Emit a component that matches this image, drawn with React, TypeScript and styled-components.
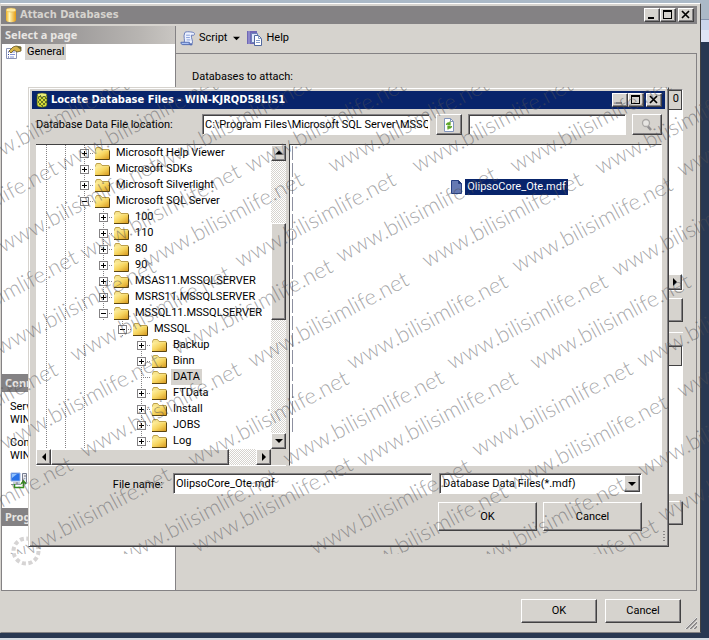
import React from "react";
import styled, { createGlobalStyle, css } from "styled-components";

const face = "#d6d3ce";
const shade = "#848284";
const dark = "#424142";
const navy = "#08246b";

const GlobalStyle = createGlobalStyle`
  * { box-sizing: border-box; }
  body { margin: 0; background: #293852; }
  body, button, input, select { font: 11px/16px Roboto, "Liberation Sans", sans-serif; color: #000; }
  button, input, select { margin: 0; padding: 0; border-radius: 0; }
`;

const raised = css`
  border: 1px solid;
  border-color: #fff ${dark} ${dark} #fff;
  box-shadow: inset -1px -1px 0 ${shade};
  background: ${face};
`;
const sunken = css`
  border: 1px solid;
  border-color: ${shade} #fff #fff ${shade};
  box-shadow: inset 1px 1px 0 ${dark};
  background: #fff;
`;

const Desktop = styled.div`
  position: relative;
  display: flex;
  flex-direction: column;
  min-height: 100vh;
  padding: 3px 8px 5px 0;
  overflow: hidden;
  border-bottom: 2px solid #d6dbe2;
  background: linear-gradient(#abb9c7 0 19px, #8494ae 19px 20px, #cbd5ea 20px 30px, #dfe5f5 30px 42px, #293852 42px);
`;
const MainWindow = styled.main`
  flex: 1;
  display: flex;
  flex-direction: column;
  padding: 2px 3px 2px 0;
  border: 1px solid;
  border-color: #fff ${dark} ${shade} ${face};
  background: ${face};
`;
const TitleBar = styled.header<{ $active?: boolean }>`
  display: flex;
  align-items: center;
  height: 18px;
  padding: 0 3px 0 4px;
  background: ${(p) => (p.$active ? navy : shade)};
  color: ${(p) => (p.$active ? "#fff" : face)};
`;
const Title = styled.h1`
  flex: 1;
  margin: 0 0 0 3px;
  font: bold 11px/16px "DejaVu Sans Condensed", "DejaVu Sans", sans-serif;
  white-space: nowrap;
`;
const Captions = styled.div`
  display: flex;
  button:last-child { margin-left: 2px; }
`;
const Caption = styled.button`
  ${raised}
  display: grid;
  place-items: center;
  width: 16px;
  height: 14px;
`;
const Body = styled.div`
  flex: 1;
  display: grid;
  grid-template-columns: 175px 1fr;
  margin-top: 2px;
  border-bottom: 1px solid ${shade};
`;
const Sidebar = styled.nav`
  border: solid ${shade};
  border-width: 0 1px;
  background: #fff;
`;
const SideTitle = styled.h2<{ $fade?: boolean }>`
  margin: 0;
  height: 18px;
  padding-left: 3px;
  color: #e8e6e3;
  font: bold 11px/18px "Noto Sans", sans-serif;
  background: ${(p) => (p.$fade ? `linear-gradient(90deg, ${shade}, #b8b5b2 80%, #c9c6c2)` : shade)};
`;
const PageList = styled.div`
  height: 330px;
`;
const PageItem = styled.button`
  display: flex;
  align-items: center;
  gap: 3px;
  height: 16px;
  padding-left: 3px;
  border: 0;
  background: none;
  span { padding: 0 2px; background: ${face}; }
`;
const Connection = styled.div`
  height: 116px;
  padding: 8px 8px 0;
  line-height: 13px;
  white-space: nowrap;
  overflow: hidden;
  p { margin: 0 0 10px; }
`;
const ConnectionLink = styled.a`
  display: flex;
  align-items: center;
  gap: 4px;
  color: #0000c0;
`;
const Progress = styled.div`
  padding: 9px 8px;
`;
const Content = styled.section`
  display: flex;
  flex-direction: column;
`;
const Toolbar = styled.div`
  display: flex;
  align-items: center;
  gap: 6px;
  height: 28px;
  padding: 0 4px 3px;
  border-bottom: 1px solid ${shade};
`;
const Tool = styled.button`
  display: flex;
  align-items: center;
  gap: 3px;
  border: 0;
  background: none;
`;
const Form = styled.div`
  flex: 1;
  padding: 15px 13px 0 16px;
  border-right: 1px solid ${shade};
`;
const Grid = styled.div<{ $tall?: boolean }>`
  ${sunken}
  display: flex;
  flex-direction: column;
  align-items: flex-end;
  justify-content: space-between;
  height: ${(p) => (p.$tall ? 202 : 149)}px;
  margin-top: ${(p) => (p.$tall ? 4 : 12)}px;
`;
const GridHead = styled.div`
  align-self: stretch;
  height: 20px;
  padding-right: 2px;
  border: 1px solid ${dark};
  background: ${face};
  text-align: right;
`;
const Actions = styled.div<{ $rule?: boolean }>`
  display: flex;
  justify-content: flex-end;
  margin-top: 7px;
  padding-bottom: 10px;
  border-bottom: ${(p) => (p.$rule ? "1px solid #fff" : "0")};
`;
const PushButton = styled.button<{ $size?: "small" | "large" }>`
  ${raised}
  width: ${(p) => (p.$size === "large" ? 99 : 76)}px;
  height: ${(p) => (p.$size === "large" ? 29 : 24)}px;
`;
const Footer = styled.footer`
  display: flex;
  gap: 8px;
  justify-content: flex-end;
  height: 39px;
  padding: 8px 0 0;
  svg { align-self: flex-end; margin: 0 0 1px -4px; }
`;

const Dialog = styled.section`
  position: absolute;
  top: 87px;
  left: 28px;
  right: 40px;
  padding: 3px;
  border: 1px solid;
  border-color: ${face} ${dark} ${dark} ${face};
  box-shadow: inset 1px 1px 0 #fff, inset -1px -1px 0 ${shade};
  background: ${face};
`;
const DialogBody = styled.div`
  display: flex;
  flex-direction: column;
  padding: 5px 3px 0 4px;
`;
const DialogGrip = styled.div`
  display: flex;
  justify-content: flex-end;
  height: 12px;
`;
const LocationRow = styled.div`
  display: grid;
  grid-template-columns: 160px 228px 26px 1fr 30px;
  gap: 6px;
  align-items: center;
  margin-bottom: 9px;
  label { white-space: nowrap; }
`;
const TextBox = styled.input`
  ${sunken}
  width: 100%;
  min-width: 0;
  height: 21px;
  padding: 0 1px 0 2px;
`;
const IconButton = styled.button`
  ${raised}
  display: grid;
  place-items: center;
  height: 21px;
`;
const Panes = styled.div`
  display: grid;
  grid-template-columns: 250px 1fr;
  gap: 3px;
  height: 322px;
`;
const TreePane = styled.div`
  display: grid;
  grid-template: 1fr 16px / 1fr 15px;
  border-top: 1px solid ${dark};
  border-bottom: 1px solid #fff;
  background: ${face};
`;
const Tree = styled.ul`
  margin: 0;
  padding: 0;
  overflow: hidden;
  background: #fff;
  list-style: none;
`;
const TreeRow = styled.li`
  display: flex;
  align-items: center;
  height: 16px;
  padding-left: 1px;
  white-space: nowrap;
  > svg { flex: none; }
`;
const Guide = styled.span<{ $line: boolean }>`
  flex: none;
  width: 19px;
  height: 16px;
  background: ${(p) =>
    p.$line ? `repeating-linear-gradient(${shade} 0 1px, transparent 1px 2px) 9px 0 / 1px 16px no-repeat` : "none"};
`;
const Branch = styled.span`
  display: flex;
  flex: none;
  align-items: center;
  width: 19px;
  height: 16px;
  padding-left: 5px;
  background:
    repeating-linear-gradient(${shade} 0 1px, transparent 1px 2px) 9px 0 / 1px 16px no-repeat,
    repeating-linear-gradient(90deg, ${shade} 0 1px, transparent 1px 2px) 9px 8px / 10px 1px no-repeat;
`;
const Toggle = styled.button`
  width: 9px;
  height: 9px;
  border: 1px solid ${shade};
  background: #fff;
  svg { display: block; }
`;
const Label = styled.span<{ $selected?: boolean }>`
  margin-left: 3px;
  padding: 0 2px;
  background: ${(p) => (p.$selected ? face : "none")};
`;
const ScrollBar = styled.div<{ $horizontal?: boolean }>`
  display: flex;
  flex-direction: ${(p) => (p.$horizontal ? "row" : "column")};
  background: repeating-conic-gradient(#fff 0 25%, ${face} 0 50%) 0 0 / 2px 2px;
`;
const ScrollButton = styled.button`
  ${raised}
  display: grid;
  place-items: center;
  flex: none;
  width: 15px;
  height: 16px;
`;
const Track = styled.span<{ $grow: number }>`
  flex: ${(p) => p.$grow} 0 0;
`;
const Thumb = styled.span<{ $grow: number }>`
  ${raised}
  flex: ${(p) => p.$grow} 0 0;
`;
const FilePane = styled.div`
  border: 1px solid;
  border-color: ${dark} #fff #fff ${dark};
  padding: 1px 2px 32px;
  background: #fff;
`;
const FileArea = styled.div`
  display: flex;
  align-items: flex-start;
  justify-content: center;
  height: 100%;
  padding: 33px 0 0 68px;
  background: repeating-linear-gradient(#8d90a0 0 14px, transparent 14px 17px) 0 0 / 1px 100% no-repeat;
`;
const FileItem = styled.button`
  display: flex;
  align-items: center;
  gap: 3px;
  border: 0;
  background: none;
  span { padding: 0 2px; background: ${navy}; color: #fff; }
`;
const NameRow = styled.div`
  display: grid;
  grid-template-columns: 137px 1fr 203px;
  margin: 7px 20px 8px 0;
  label { padding: 4px 10px 0 0; text-align: right; }
`;
const NameBox = styled.div`
  padding-right: 7px;
`;
const SelectBox = styled.div`
  ${sunken}
  display: flex;
  height: 21px;
  padding: 1px;
`;
const Select = styled.select`
  flex: 1;
  min-width: 0;
  padding: 0 2px;
  border: 0;
  appearance: none;
  background: none;
`;
const DropArrow = styled.span`
  ${raised}
  display: grid;
  place-items: center;
  width: 16px;
`;
const DialogButtons = styled.div`
  display: flex;
  justify-content: flex-end;
  gap: 6px;
  padding-right: 20px;
`;

const WatermarkLayer = styled.div`
  position: absolute;
  top: 87px;
  left: 0;
  right: 0;
  height: 467px;
  overflow: hidden;
  pointer-events: none;
`;
const Mark = styled.span<{ $x: number; $y: number }>`
  position: absolute;
  left: ${(p) => p.$x}px;
  top: ${(p) => p.$y - 107}px;
  color: rgba(80, 80, 85, 0.5);
  font: 300 22px/24px Lato, "Open Sans", sans-serif;
  white-space: nowrap;
  transform: rotate(-28deg);
  transform-origin: 0 20px;
`;

const marks: [number, number][] = [
  [-27, 172], [62, 172], [155, 173], [250, 173], [333, 173], [417, 173], [515, 173], [600, 175], [682, 177],
  [-98, 257], [3, 253], [85, 260], [148, 268], [240, 268], [341, 263], [427, 268], [517, 273], [617, 277],
  [-78, 346], [0, 355], [75, 362], [177, 355], [253, 368], [352, 370], [452, 370], [535, 370], [642, 368],
  [-98, 458], [5, 450], [85, 458], [193, 467], [288, 466], [362, 467], [477, 457], [512, 491], [643, 477], [682, 398],
  [-83, 553], [15, 563], [122, 565], [197, 553], [315, 555], [352, 580], [470, 573], [502, 615], [663, 522],
];

function Arrow({ dir, size = 8 }: { dir: "up" | "down" | "left" | "right"; size?: number }) {
  const d = { up: "M0 5.5h8L4 1.5z", down: "M0 2h8L4 6z", left: "M6 0v8L2 4z", right: "M2 0v8l4-4z" }[dir];
  return <svg width={size} height={size} viewBox="0 0 8 8"><path d={d} /></svg>;
}

function WindowButtons({ minDisabled }: { minDisabled?: boolean }) {
  return (
    <Captions>
      <Caption aria-label="Minimize" disabled={minDisabled}>
        <svg width="12" height="10"><path d="M2 8h6" stroke={minDisabled ? shade : "#000"} strokeWidth="2" /></svg>
      </Caption>
      <Caption aria-label="Maximize">
        <svg width="12" height="10" shapeRendering="crispEdges"><path d="M1 1h9M1.5 1v8M9.5 1v8M1 8.5h9" stroke="#000" fill="none" /><path d="M1 1h9" stroke="#000" strokeWidth="2" /></svg>
      </Caption>
      <Caption aria-label="Close">
        <svg width="12" height="10"><path d="M2 1l7 7M9 1L2 8" stroke="#000" strokeWidth="1.7" /></svg>
      </Caption>
    </Captions>
  );
}

function Folder() {
  return (
    <svg width="17" height="15" viewBox="0 0 17 15">
      <defs>
        <linearGradient id="folder" x1="0" y1="0" x2="1" y2="1">
          <stop offset="0" stopColor="#fff3a8" /><stop offset=".5" stopColor="#f6d45d" /><stop offset="1" stopColor="#d5961c" />
        </linearGradient>
      </defs>
      <path d="M1.5 3.5l1-2h4l1.500 2h7v9h-13.500z" fill="#f7e48c" stroke="#bda04a" />
      <path d="M1 4.500h14v9H1z" fill="url(#folder)" />
      <path d="M1 13.500h14.500V4.500" fill="none" stroke="#5b4510" />
    </svg>
  );
}

function Cylinder({ locked }: { locked?: boolean }) {
  return (
    <svg width="12" height="16" viewBox="0 0 12 16">
      <defs>
        <linearGradient id="cyl"><stop offset="0" stopColor="#f0b020" /><stop offset=".35" stopColor="#fff6b8" /><stop offset="1" stopColor="#e59a10" /></linearGradient>
      </defs>
      <path d="M1 3v10c0 3 10 3 10 0V3z" fill={locked ? "#d6dc3a" : "url(#cyl)"} />
      <ellipse cx="6" cy="3" rx="5" ry="2" fill={locked ? "#e9ee78" : "#ffeaa0"} stroke={locked ? "#33401c" : "#d9a93a"} strokeWidth=".5" />
      {locked && (
        <path d="M1 3v10c0 3 10 3 10 0V3M2 6l7 7M2 10l5 5M4 4l7 7M8 4l3 3M10 6l-7 7M8 4L2 10M11 9l-5 5M5 3L2 6" fill="none" stroke="#3a4a1c" strokeWidth=".7" />
      )}
    </svg>
  );
}

const PropertiesIcon = () => (
  <svg width="17" height="16" viewBox="0 0 17 16">
    <path d="M1.500 4.500h10v10h-10z" fill="#fff" stroke="#8b94b5" />
    <path d="M3 8h1M3 10.500h1M3 13h1" stroke="#273b9a" /><path d="M5 8h5M5 10.500h5M5 13h4" stroke="#8291d5" />
    <path d="M4 7l4-4 3-1 5 1v4l-4 1-3-2-3 3z" fill="#d8b64b" stroke="#665323" strokeWidth=".8" />
    <path d="M11 2l5 1v3z" fill="#6e6a32" />
  </svg>
);
const ScriptIcon = () => (
  <svg width="16" height="17" viewBox="0 0 17 17">
    <path d="M5 2.500c0-2 9-1 10 0 1 1 0 3-1 2.500h-2c0 4 2 6 1 9H4c2-4-1-7 1-11.500z" fill="#edf2ff" stroke="#6278b8" />
    <path d="M1 12.500h9c-1 2 1 3.500 3 2.500H3c-1.500 0-2-1-2-2.500z" fill="#adc3f4" stroke="#4d68af" />
    <path d="M6.500 5h4M6.500 7.500h4M7 10h4" stroke="#839bd5" />
  </svg>
);
const HelpIcon = () => (
  <svg width="17" height="16" viewBox="0 0 17 16">
    <path d="M1 1h10v13H1z" fill="#6f68b5" /><path d="M3 1v13" stroke="#aca7df" />
    <path d="M5.500 3.500h6v9h-6z" fill="#e3eafc" stroke="#6e82ba" />
    <path d="M8.500 5.500h4l3 3v7h-7z" fill="#fff" stroke="#52699f" /><path d="M12.500 5.500v3h3M10 10.500h4M10 12.500h4" fill="none" stroke="#849dc9" />
  </svg>
);
const ServerIcon = () => (
  <svg width="18" height="17" viewBox="0 0 18 17">
    <path d="M1 1h9v8H1z" fill="#2871e8" stroke="#91aee0" /><path d="M2 2h5L2 6z" fill="#91c3ff" />
    <path d="M3 11h7M1 12.500h10" stroke="#8e9aab" /><path d="M12.500 1.500h4v9h-4z" fill="#e9eaf0" stroke="#777e91" /><path d="M14 4h2" stroke="#777" />
    <path d="M4.500 12v3.500h9V10M11 12l2.500-3 2.500 3" fill="none" stroke="#37921e" strokeWidth="1.500" />
  </svg>
);
const Spinner = () => (
  <svg width="32" height="32" viewBox="0 0 32 32">
    <circle cx="16" cy="16" r="12.500" fill="none" stroke="#d6d4d4" strokeWidth="4" strokeDasharray="4 2.540" />
  </svg>
);
const RefreshIcon = () => (
  <svg width="14" height="16" viewBox="0 0 14 16">
    <path d="M2.500 1.500h6l3 3v10h-9z" fill="#fff" stroke="#8295bd" /><path d="M8.500 1.500v3h3" fill="none" stroke="#8295bd" />
    <path d="M4.500 8c0-2 2-2.500 4-1.500M8 4.500v3H5.500M9.500 9c0 2-2 2.500-4 1.500M6 12.500v-3h2.500" fill="none" stroke="#5da528" strokeWidth="1.300" />
  </svg>
);
const SearchIcon = () => (
  <svg width="14" height="14" viewBox="0 0 14 14">
    <path d="M7.500 8l3.500 4" stroke="#929092" strokeWidth="2.500" /><circle cx="6" cy="5" r="3.500" fill="#e7e5e2" stroke="#aaa8a6" strokeWidth="1.300" />
  </svg>
);
const FileIcon = () => (
  <svg width="11" height="14" viewBox="0 0 11 14">
    <path d="M.5.5h7l3 3v10H.5z" fill="#6579b3" stroke="#263f82" /><path d="M7.500.5v3h3" fill="#243467" stroke="#263f82" />
  </svg>
);
const Grip = () => (
  <svg width="12" height="12" viewBox="0 0 12 12"><path d="M1 12L12 1M5 12l7-7M9 12l3-3" stroke={shade} strokeWidth="1.800" /><path d="M0 12L12 0M4 12l8-8M8 12l4-4" stroke="#fff" strokeWidth=".7" /></svg>
);

type Node = { name: string; depth: number; open?: boolean; leaf?: boolean };
const nodes: Node[] = [
  { name: "Microsoft Help Viewer", depth: 2 },
  { name: "Microsoft SDKs", depth: 2 },
  { name: "Microsoft Silverlight", depth: 2 },
  { name: "Microsoft SQL Server", depth: 2, open: true },
  { name: "100", depth: 3 },
  { name: "110", depth: 3 },
  { name: "80", depth: 3 },
  { name: "90", depth: 3 },
  { name: "MSAS11.MSSQLSERVER", depth: 3 },
  { name: "MSRS11.MSSQLSERVER", depth: 3 },
  { name: "MSSQL11.MSSQLSERVER", depth: 3, open: true },
  { name: "MSSQL", depth: 4, open: true },
  { name: "Backup", depth: 5 },
  { name: "Binn", depth: 5 },
  { name: "DATA", depth: 5, leaf: true },
  { name: "FTData", depth: 5 },
  { name: "Install", depth: 5 },
  { name: "JOBS", depth: 5 },
  { name: "Log", depth: 5 },
];

function TreeNode({ node }: { node: Node }) {
  return (
    <TreeRow>
      {Array.from({ length: node.depth }, (_, i) => <Guide key={i} $line={i < 3} />)}
      <Branch>
        {!node.leaf && (
          <Toggle aria-label={`${node.open ? "Collapse" : "Expand"} ${node.name}`}>
            <svg width="7" height="7"><path d={node.open ? "M1 3.5h5" : "M1 3.5h5M3.500 1v5"} stroke="#000" /></svg>
          </Toggle>
        )}
      </Branch>
      <Folder />
      <Label $selected={node.leaf}>{node.name}</Label>
    </TreeRow>
  );
}

function LocateDialog() {
  return (
    <Dialog role="dialog" aria-labelledby="locate-title">
      <TitleBar $active>
        <Cylinder locked />
        <Title id="locate-title">Locate Database Files - WIN-KJRQD58LIS1</Title>
        <WindowButtons minDisabled />
      </TitleBar>
      <DialogBody>
        <LocationRow>
          <label htmlFor="location">Database Data File location:</label>
          <TextBox id="location" defaultValue="C:\Program Files\Microsoft SQL Server\MSSQ" />
          <IconButton aria-label="Refresh"><RefreshIcon /></IconButton>
          <TextBox aria-label="Search" />
          <IconButton aria-label="Find"><SearchIcon /></IconButton>
        </LocationRow>
        <Panes>
          <TreePane>
            <Tree>{nodes.map((n) => <TreeNode key={n.name} node={n} />)}</Tree>
            <ScrollBar>
              <ScrollButton aria-label="Scroll up"><Arrow dir="up" /></ScrollButton>
              <Track $grow={63} /><Thumb $grow={96} /><Track $grow={114} />
              <ScrollButton aria-label="Scroll down"><Arrow dir="down" /></ScrollButton>
            </ScrollBar>
            <ScrollBar $horizontal>
              <ScrollButton aria-label="Scroll left"><Arrow dir="left" /></ScrollButton>
              <Thumb $grow={178} /><Track $grow={27} />
              <ScrollButton aria-label="Scroll right"><Arrow dir="right" /></ScrollButton>
            </ScrollBar>
          </TreePane>
          <FilePane>
            <FileArea>
              <FileItem><FileIcon /><span>OlipsoCore_Ote.mdf</span></FileItem>
            </FileArea>
          </FilePane>
        </Panes>
        <NameRow>
          <label htmlFor="file-name">File name:</label>
          <NameBox><TextBox id="file-name" defaultValue="OlipsoCore_Ote.mdf" /></NameBox>
          <SelectBox>
            <Select aria-label="File type"><option>Database Data Files(*.mdf)</option></Select>
            <DropArrow><Arrow dir="down" /></DropArrow>
          </SelectBox>
        </NameRow>
        <DialogButtons>
          <PushButton $size="large">OK</PushButton>
          <PushButton $size="large">Cancel</PushButton>
        </DialogButtons>
      </DialogBody>
      <DialogGrip>
        <svg width="2" height="12"><path d="M1 0v12" stroke={dark} strokeDasharray="1 2" /></svg>
      </DialogGrip>
    </Dialog>
  );
}

export default function App() {
  return (
    <Desktop>
      <GlobalStyle />
      <MainWindow>
        <TitleBar>
          <Cylinder />
          <Title>Attach Databases</Title>
          <WindowButtons />
        </TitleBar>
        <Body>
          <Sidebar>
            <SideTitle $fade>Select a page</SideTitle>
            <PageList><PageItem><PropertiesIcon /><span>General</span></PageItem></PageList>
            <SideTitle>Connection</SideTitle>
            <Connection>
              <p>Server:<br />WIN-KJRQD58LIS1</p>
              <p>Connection:<br />WIN-KJRQD58LIS1</p>
              <ConnectionLink href="#connection"><ServerIcon />View connection</ConnectionLink>
            </Connection>
            <SideTitle>Progress</SideTitle>
            <Progress><Spinner /></Progress>
          </Sidebar>
          <Content>
            <Toolbar>
              <Tool><ScriptIcon />Script</Tool>
              <Arrow dir="down" size={7} />
              <Tool><HelpIcon />Help</Tool>
            </Toolbar>
            <Form>
              Databases to attach:
              <Grid $tall><GridHead>0</GridHead><ScrollButton aria-label="Scroll grid"><Arrow dir="right" /></ScrollButton></Grid>
              <Actions $rule><PushButton>Remove</PushButton></Actions>
              <Grid><GridHead /></Grid>
              <Actions><PushButton>Message</PushButton></Actions>
            </Form>
          </Content>
        </Body>
        <Footer>
          <PushButton>OK</PushButton>
          <PushButton>Cancel</PushButton>
          <Grip />
        </Footer>
      </MainWindow>
      <LocateDialog />
      <WatermarkLayer aria-hidden="true">
        {marks.map(([x, y]) => <Mark key={`${x}-${y}`} $x={x} $y={y}>www.bilisimlife.net</Mark>)}
      </WatermarkLayer>
    </Desktop>
  );
}
